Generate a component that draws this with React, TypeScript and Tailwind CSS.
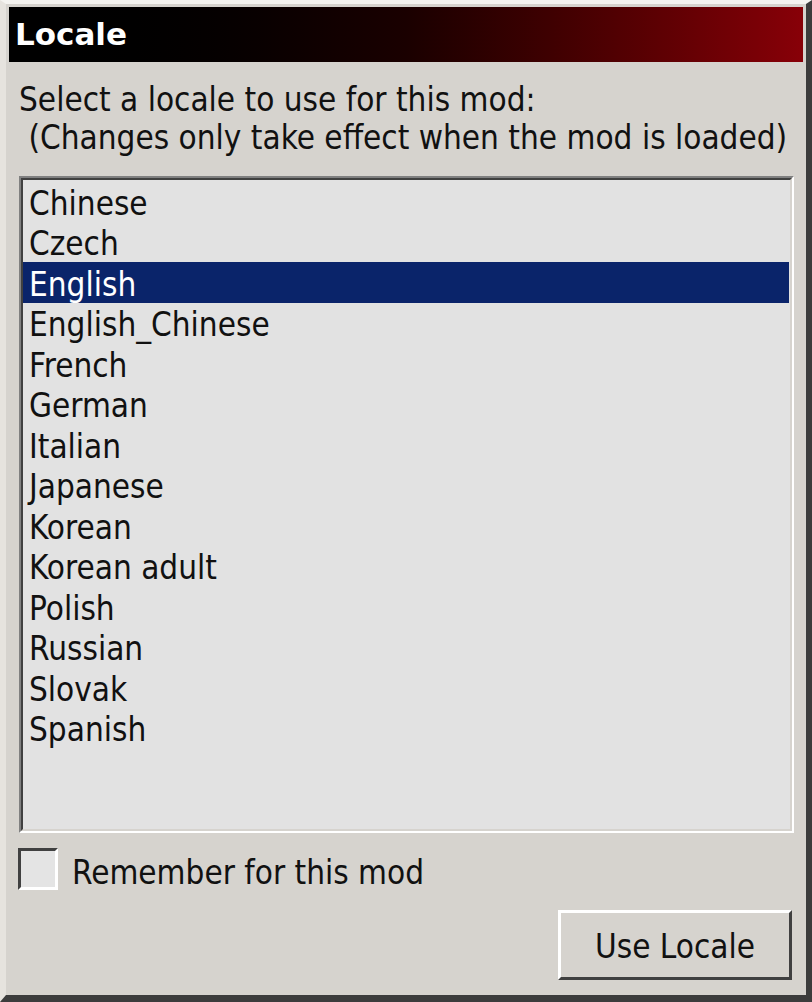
const locales = [
  'Chinese',
  'Czech',
  'English',
  'English_Chinese',
  'French',
  'German',
  'Italian',
  'Japanese',
  'Korean',
  'Korean adult',
  'Polish',
  'Russian',
  'Slovak',
  'Spanish',
];

const font = "font-['DejaVu_Sans_Condensed','DejaVu_Sans',sans-serif]";

const LocaleItem = ({ name, selected }: { name: string; selected: boolean }) => (
  <div
    className={`h-[40.5px] flex items-center pl-[6px] pt-[4px] text-[33px] leading-none ${
      selected ? 'bg-[#0a246a] text-white' : 'text-[#111]'
    }`}
  >
    {name}
  </div>
);

export default function App() {
  const selected = 'English';

  return (
    <div
      className={`w-[812px] h-[1002px] flex flex-col bg-[#d6d3ce] border-t-[4px] border-l-[6px] border-r-[6px] border-b-[7px] border-t-[#f4f3f0] border-l-[#e6e3de] border-r-[#3c3c3c] border-b-[#3c3c3c] pt-[3px] pl-[3px] pr-[3px] ${font}`}
    >
      <div className="h-[55px] flex items-center pl-[6px] bg-gradient-to-r from-[#000000] via-[#1a0000] to-[#880008]">
        <span className="font-['DejaVu_Sans',sans-serif] font-bold text-[31px] text-white leading-none">
          Locale
        </span>
      </div>

      <div className="flex flex-col flex-1 pl-[10px] pr-[9px]">
        <div className="pt-[19px] text-[33px] leading-[38px] text-[#111]">
          <div className="pl-[0px]">Select a locale to use for this mod:</div>
          <div className="whitespace-pre"> (Changes only take effect when the mod is loaded)</div>
        </div>

        <div className="mt-[19px] h-[657px] border-2 border-t-[#808080] border-l-[#808080] border-b-white border-r-white">
          <div className="h-full border-2 border-t-[#404040] border-l-[#404040] border-b-[#d6d3ce] border-r-[#d6d3ce] bg-[#e2e2e2] pt-[1px] pr-[1px]">
            {locales.map((l) => (
              <LocaleItem key={l} name={l} selected={l === selected} />
            ))}
          </div>
        </div>

        <div className="mt-[15px] flex items-center gap-[14px]">
          <div className="w-[40px] h-[42px] -ml-[1px] border-[3px] border-t-[#404040] border-l-[#404040] border-b-white border-r-white bg-[#e4e4e4]" />
          <span className="text-[33px] leading-none text-[#111] pt-[6px]">Remember for this mod</span>
        </div>

        <div className="mt-[20px] flex justify-end pr-[2px]">
          <button className="w-[234px] h-[70px] border-[3px] border-t-white border-l-white border-b-[#404040] border-r-[#404040] bg-[#d6d3ce] text-[33px] leading-none text-[#111] flex items-center justify-center pt-[2px]">
            Use Locale
          </button>
        </div>
      </div>
    </div>
  );
}
